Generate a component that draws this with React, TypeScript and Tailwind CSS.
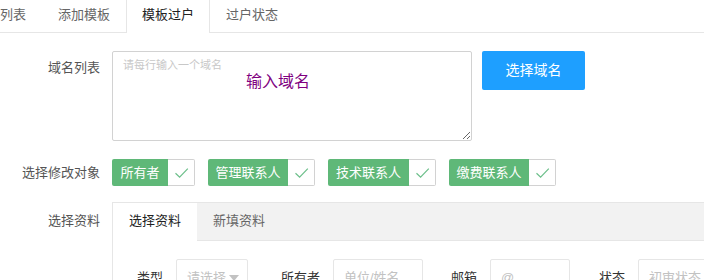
import React from "react";

const font = { fontFamily: '"Liberation Sans", "Noto Sans CJK SC", sans-serif' };

function Check({ label, w }: { label: string; w: string }) {
  return (
    <div className="flex h-[27px]">
      <div className={`flex items-center justify-center ${w} bg-[#5FB878] text-white text-[13px] rounded-l-[2px]`}>
        {label}
      </div>
      <div className="flex items-center justify-center w-[27px] border border-l-0 border-[#d2d2d2] rounded-r-[2px] bg-white">
        <svg width="15" height="12" viewBox="0 0 15 12" fill="none">
          <path d="M1.5 6.2 L5.6 10.2 L13.8 1.6" stroke="#6cbf8a" strokeWidth="1.2" />
        </svg>
      </div>
    </div>
  );
}

function Tri() {
  return (
    <svg width="10" height="6" viewBox="0 0 10 6" className="shrink-0">
      <path d="M0 0 L10 0 L5 6 Z" fill="#c2c2c2" />
    </svg>
  );
}

export default function App() {
  return (
    <div className="w-[704px] h-[280px] overflow-hidden bg-white" style={font}>
      {/* top tabs */}
      <div className="flex h-[33px] border-b border-[#e6e6e6] text-[13px]">
        <div className="-ml-[42px] w-[84px] shrink-0 h-[32px] leading-[30px] text-center text-[#666]">模板列表</div>
        <div className="w-[84px] shrink-0 h-[32px] leading-[30px] text-center text-[#666]">添加模板</div>
        <div className="relative z-10 w-[84px] shrink-0 h-[33px] leading-[30px] text-center text-[#222] bg-white border-x border-[#e6e6e6]">
          模板过户
        </div>
        <div className="w-[84px] shrink-0 h-[32px] leading-[30px] text-center text-[#666]">过户状态</div>
      </div>

      {/* row 1 */}
      <div className="flex mt-[18px]">
        <div className="w-[100px] shrink-0 text-right text-[13px] text-[#555] leading-[20px] pt-[7px]">域名列表</div>
        <div className="ml-[12px] relative">
          <textarea
            className="block w-[360px] h-[90px] border border-[#d2d2d2] rounded-[2px] px-[10px] py-[5px] text-[11px] leading-[16px] outline-none placeholder:text-[#c8c8c8]"
            placeholder="请每行输入一个域名"
          />
          <div className="absolute left-[134px] top-[20px] text-[16px] leading-[22px] text-[#800080] pointer-events-none">
            输入域名
          </div>
        </div>
        <button className="ml-[10px] w-[103px] h-[39px] bg-[#1E9FFF] text-white text-[14px] rounded-[2px]">
          选择域名
        </button>
      </div>

      {/* row 2 */}
      <div className="flex items-center mt-[18px]">
        <div className="w-[100px] shrink-0 text-right text-[13px] text-[#555]">选择修改对象</div>
        <div className="ml-[12px] flex gap-[13px]">
          <Check label="所有者" w="w-[56px]" />
          <Check label="管理联系人" w="w-[80px]" />
          <Check label="技术联系人" w="w-[81px]" />
          <Check label="缴费联系人" w="w-[80px]" />
        </div>
      </div>

      {/* row 3 */}
      <div className="flex mt-[16px]">
        <div className="w-[100px] shrink-0 text-right text-[13px] text-[#555] pt-[11px] leading-[16px]">选择资料</div>
        <div className="ml-[12px] w-[700px] shrink-0 border border-[#e6e6e6]">
          <div className="flex h-[38px] bg-[#f2f2f2] border-b border-[#e6e6e6] text-[13px]">
            <div className="relative w-[84px] h-[38px] bg-white leading-[36px] text-center text-[#222]">选择资料</div>
            <div className="w-[84px] h-[37px] leading-[36px] text-center text-[#666]">新填资料</div>
          </div>
          <div className="flex items-center pt-[18px] text-[13px]">
            <div className="w-[63px] shrink-0 text-right pr-[13px] text-[#333]">类型</div>
            <div className="w-[72px] shrink-0 h-[38px] border border-[#e6e6e6] rounded-[2px] flex items-center justify-between pl-[10px] pr-[8px] text-[#c2c2c2]">
              <span>请选择</span>
              <Tri />
            </div>
            <div className="w-[85px] shrink-0 text-right pr-[13px] text-[#333]">所有者</div>
            <div className="w-[90px] shrink-0 h-[38px] border border-[#e6e6e6] rounded-[2px] flex items-center pl-[10px] text-[#c2c2c2]">
              单位/姓名
            </div>
            <div className="w-[67px] shrink-0 text-right pr-[13px] text-[#333]">邮箱</div>
            <div className="w-[80px] shrink-0 h-[38px] border border-[#e6e6e6] rounded-[2px] flex items-center pl-[10px] text-[#c2c2c2]">
              @
            </div>
            <div className="w-[68px] shrink-0 text-right pr-[13px] text-[#333]">状态</div>
            <div className="w-[120px] shrink-0 h-[38px] border border-[#e6e6e6] rounded-[2px] flex items-center gap-[9px] pl-[10px] pr-[8px] text-[#c2c2c2] whitespace-nowrap">
              <span>初审状态</span>
              <Tri />
            </div>
          </div>
        </div>
      </div>
    </div>
  );
}
